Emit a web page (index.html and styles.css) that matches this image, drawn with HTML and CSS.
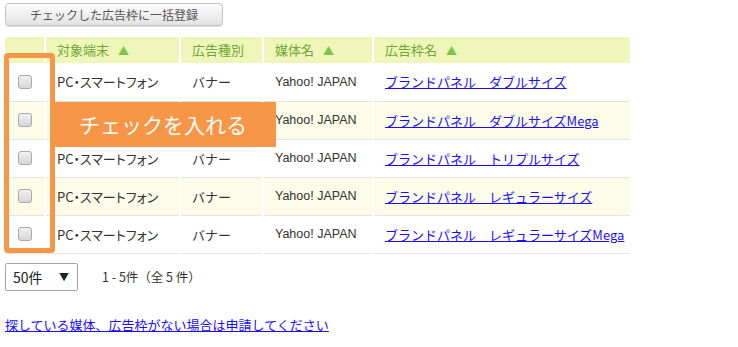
FILE: index.html
```html
<!DOCTYPE html>
<html lang="ja">
<head>
    <meta charset="UTF-8">
    <title>広告枠一括登録</title>
    <link rel="stylesheet" href="styles.css">
</head>
<body>
    <div class="page">
        <button type="button" class="bulk-btn">チェックした広告枠に一括登録</button>

        <div class="table-wrap">
            <table class="slot-table">
                <thead>
                    <tr>
                        <th class="col-check"></th>
                        <th class="col-device">対象端末 <span class="sort">▲</span></th>
                        <th class="col-type">広告種別</th>
                        <th class="col-media">媒体名 <span class="sort">▲</span></th>
                        <th class="col-slot">広告枠名 <span class="sort">▲</span></th>
                    </tr>
                </thead>
                <tbody>
                    <tr>
                        <td class="col-check"><span class="check"></span></td>
                        <td class="device">PC・スマートフォン</td>
                        <td>バナー</td>
                        <td class="latin">Yahoo! JAPAN</td>
                        <td><a href="#">ブランドパネル　ダブルサイズ</a></td>
                    </tr>
                    <tr>
                        <td class="col-check"><span class="check"></span></td>
                        <td class="device">PC・スマートフォン</td>
                        <td>バナー</td>
                        <td class="latin">Yahoo! JAPAN</td>
                        <td><a href="#">ブランドパネル　ダブルサイズMega</a></td>
                    </tr>
                    <tr>
                        <td class="col-check"><span class="check"></span></td>
                        <td class="device">PC・スマートフォン</td>
                        <td>バナー</td>
                        <td class="latin">Yahoo! JAPAN</td>
                        <td><a href="#">ブランドパネル　トリプルサイズ</a></td>
                    </tr>
                    <tr>
                        <td class="col-check"><span class="check"></span></td>
                        <td class="device">PC・スマートフォン</td>
                        <td>バナー</td>
                        <td class="latin">Yahoo! JAPAN</td>
                        <td><a href="#">ブランドパネル　レギュラーサイズ</a></td>
                    </tr>
                    <tr>
                        <td class="col-check"><span class="check"></span></td>
                        <td class="device">PC・スマートフォン</td>
                        <td>バナー</td>
                        <td class="latin">Yahoo! JAPAN</td>
                        <td><a href="#">ブランドパネル　レギュラーサイズMega</a></td>
                    </tr>
                </tbody>
            </table>

            <!-- annotation overlay -->
            <div class="note-box"></div>
            <div class="note-label">チェックを入れる</div>
        </div>

        <div class="pager">
            <div class="per-page">50件 <span class="caret">▼</span></div>
            <span class="count">1 - 5件（全 5 件）</span>
        </div>

        <a href="#" class="request-link">探している媒体、広告枠がない場合は申請してください</a>
    </div>
</body>
</html>
```

FILE: styles.css
```css
body {
    margin: 0;
    background-color: #fff;
    font-family: "Noto Sans CJK JP", "Liberation Sans", sans-serif;
    font-size: 13px;
    color: #333;
}

.page {
    padding: 3px 0 0 5px;
}

.bulk-btn {
    display: block;
    width: 218px;
    height: 23px;
    padding: 0;
    border: 1px solid #c4c4c4;
    border-radius: 4px;
    background: linear-gradient(#fdfdfd, #e2e2e2);
    box-shadow: 0 1px 1px rgba(0, 0, 0, 0.15);
    font-family: inherit;
    font-size: 12px;
    color: #555;
    line-height: 21px;
}

.table-wrap {
    position: relative;
    margin-top: 11px;
    width: 625px;
}

.slot-table {
    width: 625px;
    border-collapse: collapse;
    table-layout: fixed;
}

.slot-table th,
.slot-table td {
    box-sizing: border-box;
}

.slot-table th {
    height: 26px;
    padding: 0 0 0 11px;
    background-color: #eef7b9;
    border-left: 2px solid #fff;
    color: #6ea637;
    font-weight: normal;
    text-align: left;
    line-height: 26px;
}

.slot-table th:first-child {
    border-left: none;
}

.sort {
    margin-left: 6px;
    color: #7fc24e;
    font-size: 11px;
}

.slot-table td {
    height: 38px;
    padding: 0 0 0 11px;
    border-bottom: 1px solid #e4e4e4;
    border-left: 2px solid #fff;
    white-space: nowrap;
}

.slot-table td:first-child {
    border-left: none;
}

.slot-table tbody tr:nth-child(even) td {
    background-color: #fbfde9;
}

.slot-table .device {
    font-feature-settings: "palt";
}

.slot-table .latin {
    font-family: "Liberation Sans", sans-serif;
    font-size: 12.5px;
}

.slot-table a {
    color: #1a0dff;
}

.col-check { width: 40px; }
.col-device { width: 135px; }
.col-type { width: 83px; }
.col-media { width: 110px; }

.slot-table .col-check {
    padding: 0;
}

.check {
    display: block;
    width: 12px;
    height: 12px;
    margin: 0 auto;
    border: 1px solid #a9a9a9;
    border-radius: 3px;
    background: linear-gradient(#f1f1f1, #d6d6d6);
}

.note-box {
    position: absolute;
    left: -1px;
    top: 16px;
    width: 41px;
    height: 190px;
    border: 5px solid #f79646;
    border-radius: 4px;
}

.note-label {
    position: absolute;
    left: 45px;
    top: 65px;
    width: 226px;
    height: 45px;
    background-color: #f79646;
    color: #fff;
    font-size: 21px;
    line-height: 45px;
    text-align: center;
    font-weight: normal;
}

.pager {
    display: flex;
    align-items: center;
    gap: 24px;
    margin-top: 9px;
}

.per-page {
    display: flex;
    justify-content: space-between;
    align-items: center;
    box-sizing: border-box;
    width: 73px;
    height: 28px;
    padding: 0 8px 0 7px;
    border: 1px solid #a6a6a6;
    border-radius: 2px;
    font-size: 14px;
    color: #222;
}

.caret {
    font-size: 10px;
}

.count {
    font-size: 12.5px;
    color: #333;
}

.request-link {
    display: inline-block;
    margin-top: 24px;
    color: #1a0dff;
    font-size: 13px;
}
```
